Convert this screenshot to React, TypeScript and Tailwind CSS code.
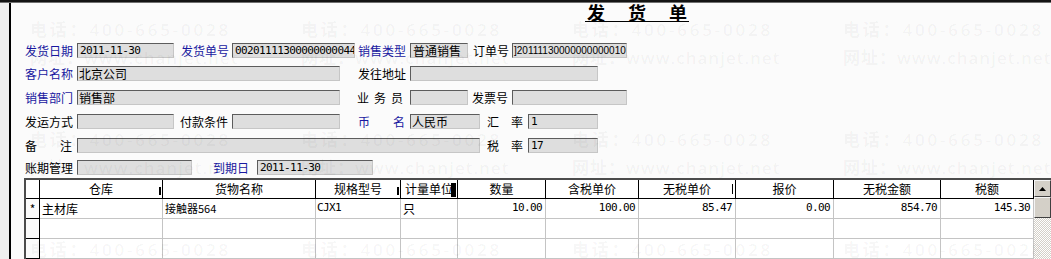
import React from "react";

const blue = "text-[#1818a0]";
const mono = "font-['DejaVu_Sans_Mono',monospace] text-[11px] tracking-[-0.6px]";

function Label({ className = "", children }: { className?: string; children: React.ReactNode }) {
  return (
    <div className={"shrink-0 whitespace-nowrap text-[12px] leading-[15px] " + className}>
      {children}
    </div>
  );
}

function Box({ className = "", children }: { className?: string; children?: React.ReactNode }) {
  return (
    <div
      className={
        "flex h-[15px] shrink-0 items-center overflow-hidden whitespace-nowrap border border-t-[#5c5c5c] border-l-[#5c5c5c] border-b-[#c6c6c6] border-r-[#c6c6c6] bg-[#dedede] pl-[1px] text-[12px] leading-[13px] " +
        className
      }
    >
      {children}
    </div>
  );
}

// two characters pushed apart, like "备    注"
function Spread({ a, b, w }: { a: string; b: string; w: string }) {
  return (
    <span className={"flex justify-between " + w}>
      <span>{a}</span>
      <span>{b}</span>
    </span>
  );
}

const headers = [
  { title: "", mark: "" },
  { title: "仓库", mark: "bar" },
  { title: "货物名称", mark: "" },
  { title: "规格型号", mark: "bar" },
  { title: "计量单位", mark: "block" },
  { title: "数量", mark: "" },
  { title: "含税单价", mark: "" },
  { title: "无税单价", mark: "thin" },
  { title: "报价", mark: "" },
  { title: "无税金额", mark: "" },
  { title: "税额", mark: "" },
];

const rows = [
  ["*", "主材库", "接触器564", "CJX1", "只", "10.00", "100.00", "85.47", "0.00", "854.70", "145.30"],
  ["", "", "", "", "", "", "", "", "", "", ""],
  ["", "", "", "", "", "", "", "", "", "", ""],
];

const gridCols =
  "grid grid-cols-[14px_123px_153px_85px_57px_88px_93px_97px_98px_107px_93px]";

export default function App() {
  return (
    <div className="relative h-[259px] w-[1051px] overflow-hidden bg-[#fbfbfb] font-['Noto_Sans_CJK_SC',sans-serif] text-black">
      <div className="h-[2px] bg-[#141414]" />
      <div className="h-[1px] bg-[#707070]" />

      <div className="flex h-[256px]">
        <div className="w-[9px] bg-[#efefef]" />
        <div className="w-[2px] bg-black" />

        <div className="flex flex-1 flex-col pl-[14px]">
          {/* Title */}
          <div className="ml-[560px] flex w-fit gap-[23px] border-b border-black px-[2px] text-[18px] font-bold leading-[18px]">
            <span>发</span>
            <span>货</span>
            <span>单</span>
          </div>

          {/* Header fields */}
          <div className="mt-[16px] flex flex-col">
            <div className="flex h-[24px] items-center">
              <Label className={"w-[52px] " + blue}>发货日期</Label>
              <Box className="w-[97px] pl-[2px]">
                <span className={mono}>2011-11-30</span>
              </Box>
              <Label className={"ml-[7px] w-[51px] " + blue}>发货单号</Label>
              <Box className="w-[123px] pl-[2px]">
                <span className={mono}>00201111300000000044</span>
              </Box>
              <Label className={"ml-[3px] w-[52px] " + blue}>销售类型</Label>
              <Box className="w-[58px] pl-[2px]">普通销售</Box>
              <Label className="ml-[5px] w-[39px]">订单号</Label>
              <Box className="w-[115px]">
                <span className="font-['Liberation_Sans',sans-serif] text-[10px]">]20111130000000000010</span>
              </Box>
            </div>

            <div className="flex h-[23px] items-center">
              <Label className={"w-[52px] " + blue}>客户名称</Label>
              <Box className="w-[263px]">北京公司</Box>
              <Label className="ml-[18px] w-[52px]">发往地址</Label>
              <Box className="w-[188px]" />
            </div>

            <div className="flex h-[24px] items-center">
              <Label className={"w-[52px] " + blue}>销售部门</Label>
              <Box className="w-[263px]">销售部</Box>
              <Label className="ml-[17px] w-[53px] tracking-[5px]">业务员</Label>
              <Box className="w-[58px]" />
              <Label className="ml-[4px] w-[40px]">发票号</Label>
              <Box className="w-[115px]" />
            </div>

            <div className="flex h-[25px] items-center">
              <Label className="w-[52px]">发运方式</Label>
              <Box className="w-[97px]" />
              <Label className="ml-[6px] w-[52px]">付款条件</Label>
              <Box className="w-[108px]" />
              <Label className={"ml-[18px] w-[52px] " + blue}>
                <Spread a="币" b="名" w="w-[47px]" />
              </Label>
              <Box className="w-[70px]">人民币</Box>
              <Label className="ml-[7px] w-[41px]">
                <Spread a="汇" b="率" w="w-[36px]" />
              </Label>
              <Box className="w-[70px] pl-[2px]">
                <span className={mono}>1</span>
              </Box>
            </div>

            <div className="flex h-[22px] items-center">
              <Label className="w-[52px]">
                <Spread a="备" b="注" w="w-[47px]" />
              </Label>
              <Box className="w-[403px]" />
              <Label className="ml-[7px] w-[41px]">
                <Spread a="税" b="率" w="w-[36px]" />
              </Label>
              <Box className="w-[70px] pl-[2px]">
                <span className={mono}>17</span>
              </Box>
            </div>

            <div className="flex h-[22px] items-center">
              <Label className="w-[52px]">账期管理</Label>
              <Box className="w-[115px]" />
              <Label className={"ml-[21px] w-[44px] " + blue}>到期日</Label>
              <Box className="w-[116px] pl-[2px]">
                <span className={mono}>2011-11-30</span>
              </Box>
            </div>
          </div>

          {/* Detail table */}
          <div className="-ml-[1px] flex border-l-2 border-t-2 border-[#4c4c4c] bg-white">
            <div className="flex w-[1008px] flex-col">
              <div className={gridCols + " h-[19px]"}>
                {headers.map((h, i) => (
                  <div
                    key={i}
                    className="relative flex items-center justify-center overflow-hidden whitespace-nowrap border-b border-r border-black text-[12px] leading-none"
                  >
                    {h.title}
                    {h.mark === "bar" && (
                      <span className="absolute right-[1px] top-[7px] h-[8px] w-[2px] bg-black" />
                    )}
                    {h.mark === "block" && (
                      <span className="absolute right-[1px] top-[3px] h-[14px] w-[5px] bg-black" />
                    )}
                    {h.mark === "thin" && (
                      <span className="absolute right-[2px] top-[4px] h-[10px] w-[1px] bg-black" />
                    )}
                  </div>
                ))}
              </div>

              {rows.map((r, ri) => (
                <div key={ri} className={gridCols + " h-[20px]"}>
                  {r.map((c, ci) => {
                    if (ci === 0) {
                      return (
                        <div
                          key={ci}
                          className="flex items-center justify-center border-b border-r border-black bg-[#fbfbfb] text-[12px]"
                        >
                          {c}
                        </div>
                      );
                    }
                    const numeric = ci >= 5;
                    return (
                      <div
                        key={ci}
                        className={
                          numeric
                            ? "flex items-center justify-end overflow-hidden whitespace-nowrap border-b border-r border-[#c4c4c4] pr-[3px] " + mono
                            : ci === 3
                            ? "flex items-center overflow-hidden whitespace-nowrap border-b border-r border-[#c4c4c4] pl-[1px] " + mono
                            : ci === 2
                            ? "flex items-center overflow-hidden whitespace-nowrap border-b border-r border-[#c4c4c4] pl-[2px] text-[11px]"
                            : "flex items-center overflow-hidden whitespace-nowrap border-b border-r border-[#c4c4c4] pl-[2px] text-[12px]"
                        }
                      >
                        {c}
                      </div>
                    );
                  })}
                </div>
              ))}
            </div>

            {/* Vertical scrollbar */}
            <div className="flex w-[17px] flex-col">
              <div className="flex h-[17px] items-center justify-center border border-t-[#f4f4f4] border-l-[#f4f4f4] border-b-[#404040] border-r-[#404040] bg-[#d4d0c8]">
                <svg width="7" height="4" viewBox="0 0 7 4">
                  <path d="M3.5 0 L7 4 L0 4 Z" fill="#000" />
                </svg>
              </div>
              <div className="h-[21px] border border-t-[#f4f4f4] border-l-[#f4f4f4] border-b-[#404040] border-r-[#404040] bg-[#d4d0c8]" />
              <div className="flex-1 bg-[repeating-conic-gradient(#d4d0c8_0%_25%,#ffffff_0%_50%)] bg-size-[2px_2px]" />
            </div>
          </div>
        </div>
      </div>

      {/* Watermark overlay */}
      <div className="pointer-events-none absolute inset-0 grid auto-rows-[110px] grid-cols-[repeat(4,271px)] pl-[30px] pt-[21px] font-['Open_Sans','Noto_Sans_CJK_SC',sans-serif] text-[17px] font-semibold leading-[17px] text-[rgba(0,0,0,0.045)]">
        {Array.from({ length: 12 }).map((_, i) => (
          <div key={i} className="flex flex-col whitespace-nowrap">
            <span className="tracking-[2.8px]">电话：400-665-0028</span>
            <span className="mt-[11px] tracking-[1px]">网址：www.chanjet.net</span>
          </div>
        ))}
      </div>
    </div>
  );
}
